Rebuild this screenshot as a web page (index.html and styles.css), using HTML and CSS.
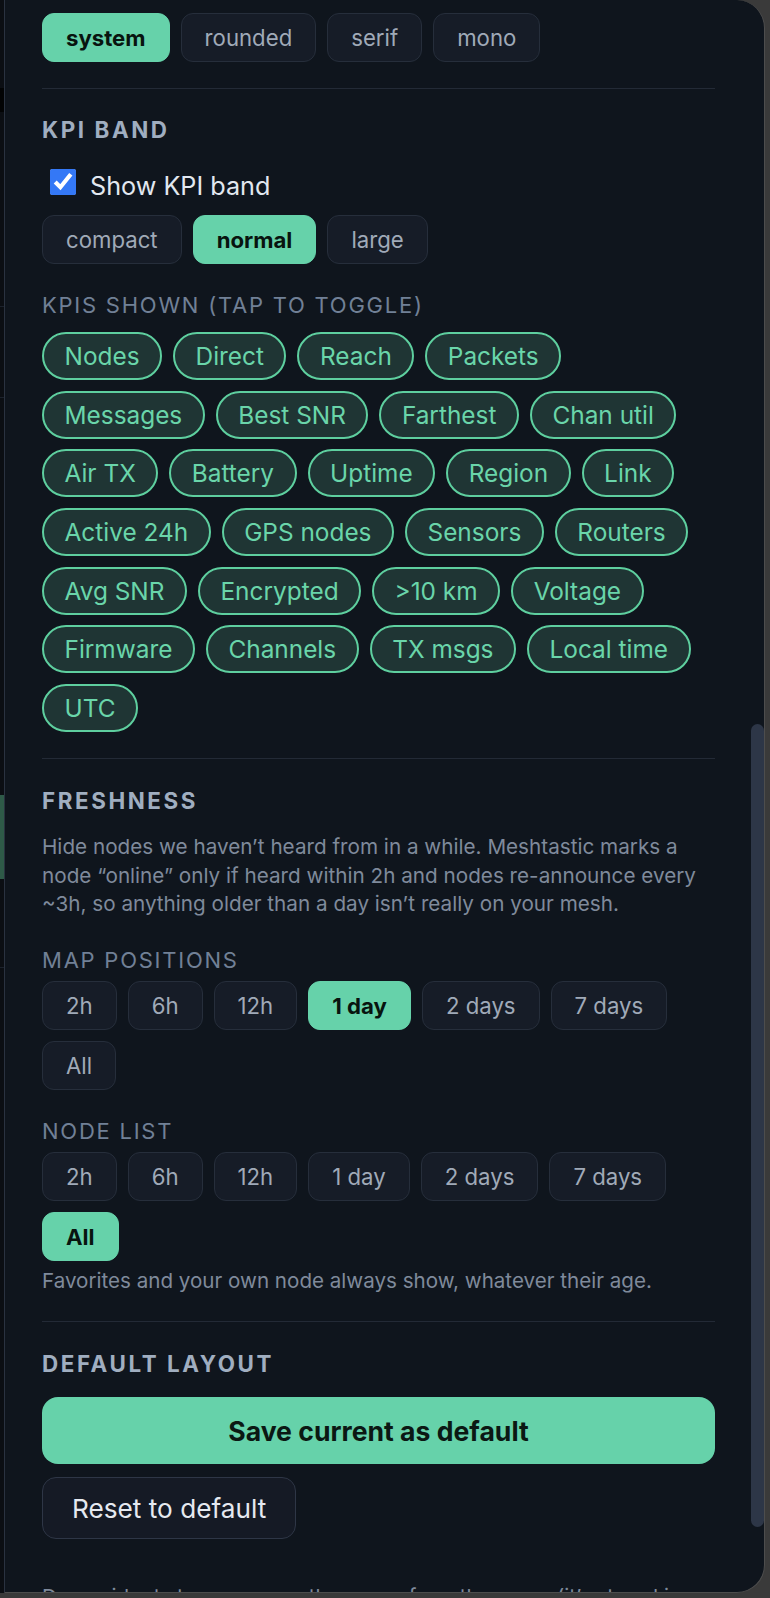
FILE: index.html
```html
<!DOCTYPE html>
<html lang="en">
<head>
  <meta charset="UTF-8">
  <meta name="viewport" content="width=device-width, initial-scale=1.0">
  <title>Display settings</title>
  <link rel="stylesheet" href="styles.css">
</head>
<body>
  <div class="screen">
    <!-- the page that sits behind the drawer -->
    <div class="behind">
      <div class="behind-bar"></div>
      <div class="behind-line l1"></div>
      <div class="behind-line l2"></div>
      <div class="behind-green"></div>
      <div class="behind-line l3"></div>
    </div>

    <aside class="panel">
      <div class="scroll">
        <div class="seg">
          <button class="opt on">system</button>
          <button class="opt">rounded</button>
          <button class="opt">serif</button>
          <button class="opt">mono</button>
        </div>

        <section class="group">
          <h3>KPI band</h3>
          <label class="check">
            <input type="checkbox" checked>
            <span>Show KPI band</span>
          </label>
          <div class="seg">
            <button class="opt">compact</button>
            <button class="opt on">normal</button>
            <button class="opt">large</button>
          </div>

          <div class="sub">KPIs shown (tap to toggle)</div>
          <div class="chips">
            <span class="chip">Nodes</span>
            <span class="chip">Direct</span>
            <span class="chip">Reach</span>
            <span class="chip">Packets</span>
            <span class="chip">Messages</span>
            <span class="chip">Best SNR</span>
            <span class="chip">Farthest</span>
            <span class="chip">Chan util</span>
            <span class="chip">Air TX</span>
            <span class="chip">Battery</span>
            <span class="chip">Uptime</span>
            <span class="chip">Region</span>
            <span class="chip">Link</span>
            <span class="chip">Active 24h</span>
            <span class="chip">GPS nodes</span>
            <span class="chip">Sensors</span>
            <span class="chip">Routers</span>
            <span class="chip">Avg SNR</span>
            <span class="chip">Encrypted</span>
            <span class="chip">&gt;10 km</span>
            <span class="chip">Voltage</span>
            <span class="chip">Firmware</span>
            <span class="chip">Channels</span>
            <span class="chip">TX msgs</span>
            <span class="chip">Local time</span>
            <span class="chip">UTC</span>
          </div>
        </section>

        <section class="group">
          <h3>Freshness</h3>
          <p class="note first">Hide nodes we haven’t heard from in a while. Meshtastic marks a node “online” only if heard within 2h and nodes re-announce every ~3h, so anything older than a day isn’t really on your mesh.</p>

          <div class="sub">Map positions</div>
          <div class="seg">
            <button class="opt">2h</button>
            <button class="opt">6h</button>
            <button class="opt">12h</button>
            <button class="opt on">1 day</button>
            <button class="opt">2 days</button>
            <button class="opt">7 days</button>
            <button class="opt">All</button>
          </div>

          <div class="sub">Node list</div>
          <div class="seg">
            <button class="opt">2h</button>
            <button class="opt">6h</button>
            <button class="opt">12h</button>
            <button class="opt">1 day</button>
            <button class="opt">2 days</button>
            <button class="opt">7 days</button>
            <button class="opt on">All</button>
          </div>
          <p class="note after">Favorites and your own node always show, whatever their age.</p>
        </section>

        <section class="group">
          <h3>Default layout</h3>
          <button class="save">Save current as default</button>
          <button class="reset">Reset to default</button>
          <p class="note tail">Drag widgets to rearrange, then save from the menu (it’s stored in this browser only).</p>
        </section>
      </div>
      <div class="thumb"></div>
    </aside>
  </div>
</body>
</html>
```

FILE: styles.css
```css
body {
  margin: 0;
  background-color: #3a3a3a;
  font-family: "Inter", "Noto Sans", sans-serif;
  overflow: hidden;
}

.screen {
  display: flex;
  height: 1593px;
}

/* page behind the drawer, only a sliver shows */
.behind {
  width: 4px;
  flex: none;
  background-color: #0b0e13;
}
.behind-bar {
  height: 24px;
  margin-top: 88px;
  background-color: #020304;
}
.behind-line {
  height: 1px;
  background-color: #1c222c;
}
.behind-line.l1 { margin-top: 194px; }
.behind-line.l2 { margin-top: 90px; }
.behind-green {
  height: 84px;
  margin-top: 397px;
  background-color: #2e5a48;
}
.behind-line.l3 { margin-top: 88px; }

.panel {
  position: relative;
  flex: none;
  width: 759px;
  height: 1592px;
  background-color: #0f151d;
  border-left: 1px solid #2a3240;
  border-right: 1px solid #4d4d4d;
  border-bottom: 1px solid #4d4d4d;
  border-radius: 0 28px 28px 0;
  overflow: hidden;
}
.scroll {
  padding: 13px 49px 0 37px;
}
.thumb {
  position: absolute;
  right: 0;
  top: 724px;
  width: 13px;
  height: 803px;
  border-radius: 7px;
  background-color: #2d3647;
}

/* segmented option buttons */
.seg {
  display: flex;
  flex-wrap: wrap;
  gap: 11px;
}
.opt {
  height: 49px;
  padding: 0 23px;
  border: 1px solid #262e3b;
  border-radius: 12px;
  background-color: #161c27;
  color: #a0aab8;
  font-family: inherit;
  font-size: 22.2px;
}
.opt.on {
  background-color: #66d2aa;
  border-color: #66d2aa;
  color: #08140f;
  font-weight: 700;
}

.group {
  margin-top: 26px;
  padding-top: 28px;
  border-top: 1px solid #232a36;
}
.group + .group {
  padding-top: 29px;
}

h3 {
  margin: 0;
  font-size: 22.4px;
  line-height: 26px;
  font-weight: 700;
  letter-spacing: 0.115em;
  text-transform: uppercase;
  color: #a0aec0;
}

.check {
  display: flex;
  align-items: flex-start;
  gap: 14px;
  margin: 22px 0 14px;
  padding-left: 8px;
}
.check input {
  width: 26px;
  height: 26px;
  margin: 4px 0 0;
  accent-color: #3478f6;
}
.check span {
  padding-top: 6px;
  font-size: 25.2px;
  line-height: 30px;
  color: #e2e8f0;
}

.sub {
  margin: 28px 0 8px;
  font-size: 22px;
  line-height: 26px;
  letter-spacing: 0.08em;
  text-transform: uppercase;
  color: #718096;
}

.chips {
  display: flex;
  flex-wrap: wrap;
  gap: 10.7px 11px;
  margin-top: 14px;
}
.chip {
  box-sizing: border-box;
  height: 48px;
  padding: 0 20.5px;
  border: 2px solid #5ecf9f;
  border-radius: 24px;
  background-color: #1f3534;
  color: #6ad5aa;
  font-size: 24.4px;
  line-height: 44px;
}

.note {
  margin: 0;
  font-size: 20.6px;
  line-height: 28.5px;
  color: #7f8a9b;
}
.note.first {
  margin-top: 19px;
  font-size: 20.7px;
}
.note.after { margin-top: 6px; }
.note.tail { margin-top: 44px; }

.save {
  display: block;
  width: 100%;
  height: 67px;
  margin-top: 20px;
  border: none;
  border-radius: 16px;
  background-color: #66d2aa;
  color: #0b1813;
  font-family: inherit;
  font-size: 26.6px;
  font-weight: 700;
}
.reset {
  display: block;
  height: 62px;
  margin-top: 13px;
  padding: 0 29px;
  border: 1px solid #2e3646;
  border-radius: 14px;
  background-color: #151a25;
  color: #e5e9f0;
  font-family: inherit;
  font-size: 26.2px;
}
```
